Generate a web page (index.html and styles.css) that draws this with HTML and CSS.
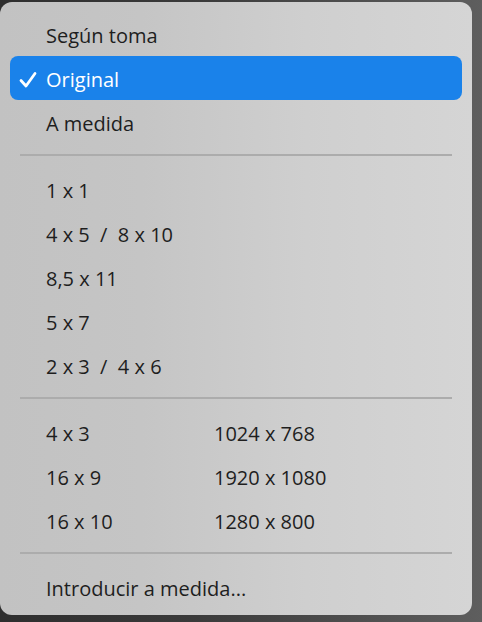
FILE: index.html
```html
<!DOCTYPE html>
<html lang="es">
<head>
    <meta charset="UTF-8">
    <meta name="viewport" content="width=device-width, initial-scale=1.0">
    <title>Relación de aspecto</title>
    <link rel="stylesheet" href="styles.css">
</head>
<body>
    <div class="menu">
        <div class="item"><span>Según toma</span></div>
        <div class="item selected">
            <svg class="check" width="18" height="18" viewBox="0 0 18 18">
                <polyline points="2,9.5 7,15 16,2.5" fill="none" stroke="#fff" stroke-width="2.8" stroke-linecap="round" stroke-linejoin="round"/>
            </svg>
            <span>Original</span>
        </div>
        <div class="item"><span>A medida</span></div>

        <div class="sep"></div>

        <div class="item"><span>1 x 1</span></div>
        <div class="item"><span>4 x 5  /  8 x 10</span></div>
        <div class="item"><span>8,5 x 11</span></div>
        <div class="item"><span>5 x 7</span></div>
        <div class="item"><span>2 x 3  /  4 x 6</span></div>

        <div class="sep"></div>

        <div class="item pair"><span>4 x 3</span><span>1024 x 768</span></div>
        <div class="item pair"><span>16 x 9</span><span>1920 x 1080</span></div>
        <div class="item pair"><span>16 x 10</span><span>1280 x 800</span></div>

        <div class="sep"></div>

        <div class="item"><span>Introducir a medida...</span></div>
    </div>
</body>
</html>
```

FILE: styles.css
```css
body {
    margin: 0;
    padding: 0;
    width: 482px;
    height: 622px;
    overflow: hidden;
    background: linear-gradient(to right, #2e2e2e 0%, #3a3a3a 40%, #5e5e5e 100%);
    font-family: "Open Sans", "Liberation Sans", sans-serif;
}
.menu {
    box-sizing: border-box;
    width: 472px;
    height: 613px;
    margin-top: 2px;
    padding: 10px 10px 0 10px;
    border-radius: 12px;
    background: linear-gradient(to right, #c2c2c2 0%, #c5c5c5 30%, #cfcfcf 65%, #d5d5d5 100%);
}
.item {
    position: relative;
    box-sizing: border-box;
    height: 44px;
    display: flex;
    align-items: center;
    padding: 3px 0 0 36px;
    font-size: 20px;
    color: #1e1e1e;
    border-radius: 8px;
}
.item span {
    white-space: pre;
}
.item.selected {
    background: #1a82ea;
    color: #fff;
}
.check {
    position: absolute;
    left: 9px;
    top: 15px;
}
.pair {
    display: grid;
    grid-template-columns: 168px auto;
    align-content: center;
}
.sep {
    height: 2px;
    margin: 10px 10px 11px 10px;
    background: #acacac;
}
```
